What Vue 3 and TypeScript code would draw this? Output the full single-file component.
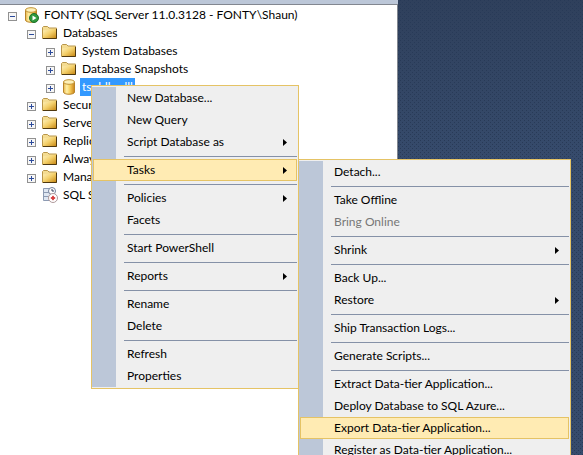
<script setup lang="ts">
interface TreeNode { label: string; level: number; icon: 'server' | 'folder' | 'database' | 'agent'; state?: 'open' | 'closed'; selected?: boolean }
interface MenuItem { label: string; sub?: boolean; active?: boolean; disabled?: boolean }

const nodes: TreeNode[] = [
  { label: 'FONTY (SQL Server 11.0.3128 - FONTY\\Shaun)', level: 0, icon: 'server', state: 'open' },
  { label: 'Databases', level: 1, icon: 'folder', state: 'open' },
  { label: 'System Databases', level: 2, icon: 'folder', state: 'closed' },
  { label: 'Database Snapshots', level: 2, icon: 'folder', state: 'closed' },
  { label: 'tsqldbadll', level: 2, icon: 'database', state: 'closed', selected: true },
  { label: 'Security', level: 1, icon: 'folder', state: 'closed' },
  { label: 'Server Objects', level: 1, icon: 'folder', state: 'closed' },
  { label: 'Replication', level: 1, icon: 'folder', state: 'closed' },
  { label: 'AlwaysOn High Availability', level: 1, icon: 'folder', state: 'closed' },
  { label: 'Management', level: 1, icon: 'folder', state: 'closed' },
  { label: 'SQL Server Agent', level: 1, icon: 'agent' },
]

const databaseMenu: MenuItem[][] = [
  [{ label: 'New Database...' }, { label: 'New Query' }, { label: 'Script Database as', sub: true }],
  [{ label: 'Tasks', sub: true, active: true }],
  [{ label: 'Policies', sub: true }, { label: 'Facets' }],
  [{ label: 'Start PowerShell' }],
  [{ label: 'Reports', sub: true }],
  [{ label: 'Rename' }, { label: 'Delete' }],
  [{ label: 'Refresh' }, { label: 'Properties' }],
]

const tasksMenu: MenuItem[][] = [
  [{ label: 'Detach...' }],
  [{ label: 'Take Offline' }, { label: 'Bring Online', disabled: true }],
  [{ label: 'Shrink', sub: true }],
  [{ label: 'Back Up...' }, { label: 'Restore', sub: true }],
  [{ label: 'Ship Transaction Logs...' }],
  [{ label: 'Generate Scripts...' }],
  [{ label: 'Extract Data-tier Application...' }, { label: 'Deploy Database to SQL Azure...' }, { label: 'Export Data-tier Application...', active: true }, { label: 'Register as Data-tier Application...' }],
]

const menus = [
  { name: 'database', groups: databaseMenu },
  { name: 'tasks', groups: tasksMenu },
]
</script>

<template>
  <main class="workspace">
    <svg class="defs" aria-hidden="true">
      <defs>
        <linearGradient id="gold" x1="0" x2="1" y1="0" y2="0">
          <stop offset="0" stop-color="#e8b64a" /><stop offset="0.3" stop-color="#fff0a8" /><stop offset="0.6" stop-color="#f6cc58" /><stop offset="1" stop-color="#c8821a" />
        </linearGradient>
        <linearGradient id="folder" x1="0" x2="1" y1="0" y2="1">
          <stop offset="0" stop-color="#fff3c0" /><stop offset="0.5" stop-color="#f3cf6a" /><stop offset="1" stop-color="#c98a16" />
        </linearGradient>
      </defs>
    </svg>

    <section class="explorer" aria-label="Object Explorer">
      <ul class="tree">
        <li v-for="node in nodes" :key="node.label" class="node" :class="'level-' + node.level">
          <button v-if="node.state" type="button" class="expander" :aria-label="(node.state === 'open' ? 'Collapse ' : 'Expand ') + node.label">
            <svg viewBox="0 0 9 9" shape-rendering="crispEdges">
              <rect x="0.5" y="0.5" width="8" height="8" fill="#f6f6f6" stroke="#919191" />
              <path d="M2 4h5v1H2z" fill="#2b4a9b" />
              <path v-if="node.state === 'closed'" d="M4 2h1v5H4z" fill="#2b4a9b" />
            </svg>
          </button>
          <span v-else class="expander"></span>
          <svg class="icon" viewBox="0 0 16 16" aria-hidden="true">
            <template v-if="node.icon === 'folder'">
              <path d="M.5 13.500v-11l1-1h4l1.500 1.500h7.500v10.500z" fill="#f4dc92" stroke="#b9964a" />
              <path d="M1 5.500l6-.5 1-1h6v9H1z" fill="url(#folder)" />
              <path d="M14.500 4v9.500H1" fill="none" stroke="#4e3810" />
            </template>
            <template v-else-if="node.icon === 'agent'">
              <path d="M1.500 1.500h8v12h-8z" fill="#dfe7f2" stroke="#8d9bb3" />
              <path d="M2 5.500h7M2 9.500h7" stroke="#8d9bb3" />
              <circle cx="10" cy="4" r="3.500" fill="#fff" stroke="#74819b" />
              <path d="M10 2v2h2" fill="none" stroke="#33415c" />
              <circle cx="11" cy="11" r="4.500" fill="#fff" stroke="#b09a9c" />
              <path d="M10.500 9h1v1.500H13v1h-1.500V13h-1v-1.500H9v-1h1.500z" fill="#d02020" stroke="#d02020" stroke-width="0.500" />
            </template>
            <template v-else>
              <path d="M2.500 3v10c0 3 11 3 11 0V3z" fill="url(#gold)" stroke="#b9842a" />
              <ellipse cx="8" cy="3" rx="5.500" ry="2.300" fill="#fdf0b8" stroke="#c29334" />
              <template v-if="node.icon === 'server'">
                <circle cx="11" cy="11" r="4.500" fill="#2f9a3c" stroke="#1e6f2a" />
                <path d="M9.500 8.500v5l4-2.500z" fill="#fff" />
              </template>
            </template>
          </svg>
          <span class="label" :class="{ selected: node.selected }">{{ node.label }}</span>
        </li>
      </ul>
    </section>

    <div v-for="menu in menus" :key="menu.name" class="menu" :class="menu.name" role="menu">
      <div v-for="(group, g) in menu.groups" :key="g" class="group" role="group">
        <button v-for="item in group" :key="item.label" type="button" role="menuitem" class="item" :class="{ active: item.active }" :disabled="item.disabled">
          <span>{{ item.label }}</span>
          <svg v-if="item.sub" class="arrow" viewBox="0 0 4 7" aria-hidden="true"><path d="M0 0l4 3.500L0 7z" /></svg>
        </button>
      </div>
    </div>
  </main>
</template>

<style>
body {
  margin: 0;
}
</style>

<style scoped>
.workspace {
  position: relative;
  display: flex;
  height: 100vh;
  overflow: hidden;
  font: 12px/18px Lato, sans-serif;
  color: #000;
  background:
    conic-gradient(from 270deg at 1px 1px, #283a57 90deg, transparent 0) 0 0 / 4px 4px,
    conic-gradient(from 270deg at 1px 1px, #283a57 90deg, transparent 0) 2px 2px / 4px 4px,
    linear-gradient(#2f405c, #364b6c 160px);
}
.defs {
  position: absolute;
  width: 0;
  height: 0;
}
.explorer {
  box-sizing: border-box;
  width: 398px;
  border-top: 4px solid #bcc7d8;
  background: #fff;
}
.tree {
  box-sizing: border-box;
  height: 100%;
  margin: 0;
  padding: 1px 0 0 8px;
  border-top: 1px solid #828790;
  border-right: 1px solid #828790;
  list-style: none;
}
.node {
  display: flex;
  align-items: center;
  height: 18px;
  white-space: nowrap;
}
.level-1 {
  padding-left: 19px;
}
.level-2 {
  padding-left: 38px;
}
.expander {
  width: 9px;
  height: 9px;
  margin: 2px 6px 0 0;
  padding: 0;
  border: 0;
  background: none;
}
.expander svg {
  display: block;
}
.icon {
  width: 16px;
  height: 16px;
  margin-right: 3px;
}
.label {
  padding: 0 2px;
}
.selected {
  color: #fff;
  background: #3399ff;
}
.menu {
  position: absolute;
  box-sizing: border-box;
  padding: 1px;
  border: 1px solid #e5c365;
  background: linear-gradient(#bcc7d8, #bcc7d8) 0 1px / 24px calc(100% - 2px) no-repeat #efefef;
}
.database {
  top: 85px;
  left: 91px;
  width: 208px;
}
.tasks {
  top: 159px;
  left: 298px;
  width: 273px;
}
.group + .group::before {
  content: "";
  display: block;
  height: 1px;
  margin: 3px 0 2px 31px;
  background: #8591a7;
}
.item {
  display: flex;
  align-items: center;
  justify-content: space-between;
  box-sizing: border-box;
  width: 100%;
  height: 22px;
  padding: 0 9px 0 33px;
  border: 1px solid transparent;
  background: none;
  color: #000;
  font: inherit;
  text-align: left;
  white-space: nowrap;
}
.item:disabled {
  color: #777;
}
.item.active {
  border-color: #e5c365;
  background: #ffebb3;
}
.arrow {
  width: 4px;
  height: 7px;
}
</style>
